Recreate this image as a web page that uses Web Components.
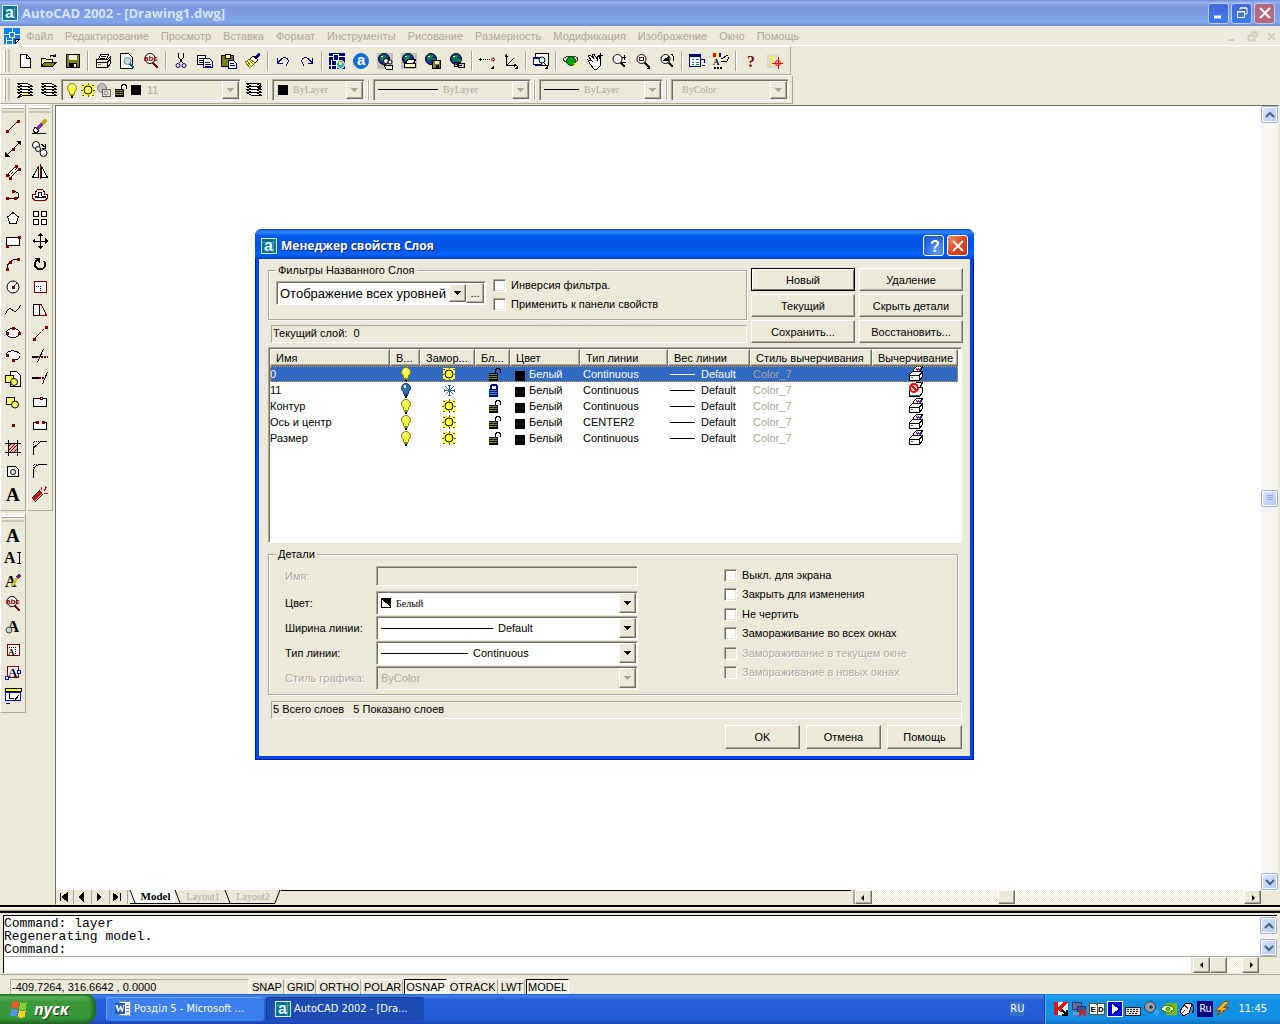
<!DOCTYPE html>
<html lang="ru">
<head>
<meta charset="utf-8">
<title>AutoCAD 2002 - [Drawing1.dwg]</title>
<style>
  html, body { height: 100%; margin: 0; overflow: hidden; }
  body { font: 11px/14px "Liberation Sans", Arial, sans-serif; color: #000; background: #ece9d8; }
</style>
</head>
<body>
<cad-desktop></cad-desktop>

<script>
// Icons are 16x16 fragments. p() strokes a path, f() fills one, r() is a box.
const p = (d, c = "#000", w = 1) => `<path d="${d}" fill="none" stroke="${c}" stroke-width="${w}"/>`;
const f = (d, c = "#000", s = "none") => `<path d="${d}" fill="${c}" stroke="${s}"/>`;
const r = (x, y, w, h, c = "#000", s = "none") => `<rect x="${x}" y="${y}" width="${w}" height="${h}" fill="${c}" stroke="${s}"/>`;
const o = (x, y, rad, c = "none", s = "#000") => `<circle cx="${x}" cy="${y}" r="${rad}" fill="${c}" stroke="${s}" shape-rendering="auto"/>`;
const t = (x, y, size, s, c = "#000", fam = "Liberation Serif") =>
  `<text x="${x}" y="${y}" font-family="${fam}" font-weight="bold" font-size="${size}" fill="${c}">${s}</text>`;
const dash = (path, pattern = "1 1") => path.replace("/>", ` stroke-dasharray="${pattern}"/>`);
const dot = (x, y) => r(x - 1, y - 1, 3, 3, "#800000");

const RED = "#800000";
const NAVY = "#000080";
const SANS = "Liberation Sans";
const globe = (x, y, s) => o(x, y, s, "#1030b0", "#000") + f(`M${x - 4} ${y - 2}h2v-2h4v2h-1v2h-2v2h-2zM${x + 1} ${y}h4v3h-2v1h-2z`, "#009020") + r(x - 3, y - 3, 2, 1, "#fff");
const lens = o(6.5, 6, 4.5, "#fff") + p("M10 10l4 4", "#000", 2);
const corner = f("M15 12v4h-4z");
const flop = (x, y, s) => r(x, y, s, s, "#808000", "#000") + r(x + 2, y, s - 4, s / 2 - 1, "#ece9d8") + r(x + 3, y + s - 4, s - 5, 4);
const printer = f("M5.500 1.500h8l-2 5h-8z", "#fff", "#000") + f("M1.500 6.500h11l3-3v7l-3 4h-11z", "#ece9d8", "#000") +
  p("M1 9.500h11l3-3M12.500 10v4M6 3.500h5M5 5.500h5") + r(3, 11, 3, 1, "#808000");
const sheet = (y, c) => f(`M.5 ${y}.500h10l5 3h-10z`, c, "#000");
const layers = (c) => sheet(10, c) + sheet(7, "#fff") + sheet(4, "#fff") + sheet(1, "#fff");
const bulb = (c, e = "#808000") => o(8, 6, 4.5, c, e) + r(6, 9, 4, 3, c) + p("M5.500 10v2M10.500 10v2", e) + r(6, 12, 4, 2, e) + r(7, 14, 2, 2) + r(6, 3, 2, 3, "#fff");
const padlock = (open, c) => p(open ? "M9.500 8V3.500h1v-1h3v1h1V7" : "M5 7V4l1-1h4l1 1v3", open ? "#000" : NAVY, open ? 1 : 2) +
  r(3, 7, 9, 8, open ? "#000" : NAVY) + p("M3 8.500h8M3 10.500h8M3 12.500h8", c);
const paper = f("M5.500 3.500l3-3h6l-3 6h-7z", "#fff", "#000") + f("M1.500 8.500l3-3h10v5l-3 4h-10z", "#fff", "#000");
const bigA = (x, y, s) => t(x, y, s, "A");

const ICONS = {
  blueprint: r(0, 0, 16, 16, "#0080ff") + p("M5.500 4.500h5v5h-5zM0 6.500h5M11 6.500h5M8.500 0v4M8.500 10v6M2.500 9v7M2.500 12.500h6", "#fff") + f("M16 11l-5 5h5z", "#fff") + f("M11 16v-5h5z", "#ece9d8", "#000"),
  app: r(0, 0, 16, 16, "#d8f0f8") + r(1, 1, 14, 14, "#087090") + p("M1 4.500h14M12.500 1v14", "#3c9cb4") + t(3, 13, 16, "a", "#e8fbff", SANS),
  blank: f("M3.500 1.500h6l4 4v9h-10z", "#fff", "#000") + p("M9.500 2v3.500h4"),
  open: f("M.5 13.500v-8h4l1 1h6v3", "#ffff80", "#000") + f("M.5 13.500l3-4.500h12l-4 4.500z", "#808000", "#000") + p("M9 3.500q2-3 5 0M14.500 1v3M12 3.500h3"),
  save: r(1.500, 1.500, 13, 13, "#808000", "#000") + r(4, 2, 8, 5, "#ece9d8") + r(4, 10, 8, 5) + r(9, 11, 2, 3, "#fff"),
  print: printer,
  preview: f("M1.500 .5h8l4 4v11h-12z", "#fff", "#000") + o(8.500, 8, 3.500, "#b0e8e8", "#808080") + p("M11 11l4 4", "#006080", 2),
  find: o(7, 5.500, 5, "#fff", "#000") + t(1, 8, 8, "abc", RED, SANS) + p("M10 10l5 5", RED, 2),
  cut: p("M5.500 0v4l4 6M10.500 0v4l-4 6") + o(5, 12.500, 2, "none", NAVY) + o(11, 12.500, 2, "none", NAVY),
  copy: r(.5, 2.500, 8, 9, "#fff", "#000") + p("M2 5.500h5M2 7.500h5M2 9.500h5") + f("M6.500 5.500h6l3 3v6h-9z", "#fff", NAVY) + p("M8 9.500h5M8 11.500h6M8 13h6", NAVY),
  paste: r(.5, 2.500, 12, 11, "#808000", "#000") + r(4, 1, 5, 4, "#ffff80", "#000") + f("M7.500 7.500h5l3 3v5h-8z", "#fff", NAVY) + p("M9 10.500h4M9 12.500h5", NAVY),
  brush: p("M10 5l5-4", NAVY, 3) + f("M8 3l5 4-3 3-5-4z", "#fff", "#000") + f("M5 6l5 4-5 5-5-6z", "#ffffc0", "#808000") + p("M2 8l4 5M4 7l4 4", "#808000"),
  undo: p("M2.500 5v5h5M3 9.500l4-4q3-2 5 0t1 4l-2 3", NAVY, 1),
  redo: p("M13.500 5v5h-5M13 9.500l-4-4q-3-2-5 0t-1 4l2 3", NAVY, 1),
  today: r(0, 0, 16, 16, NAVY) + p("M0 3.500h4M10 3.500h6M4.500 1v6h5V1zM7 7v9M2.500 7v9M0 12.500h7", "#fff") + o(11.500, 11.500, 4, "#20a0e0", "#fff") + f("M10 9h3v3h-3z", "#ffff00"),
  aball: o(8, 8, 7.500, "#0a6cd8", "#0a6cd8") + t(4, 12, 15, "a", "#fff", SANS),
  meet: r(0, 0, 16, 16, "#c0c0c0") + globe(7, 6, 5.500) + o(9, 8, 2.500, "#fff") + o(13, 9, 2, "#fff") + f("M7 12h8v4H9z", "#fff", "#000"),
  webprint: r(0, 0, 16, 16, "#c0c0c0") + globe(7, 6, 5.500) + f("M6.500 6.500h8l-2 4h-8z", "#fff", "#000") + r(3.500, 10.500, 11, 4, "#ffffc0", "#000"),
  websave: globe(6, 6, 5.500) + flop(7.500, 7.500, 8),
  link: globe(7, 6, 5.500) + r(5.500, 9.500, 6, 4, "none", "#000") + r(9.500, 10.500, 6, 4, "#c0c0c0", "#000") + p("M8 12.500h5"),
  track: p("M0 6.500h3M1.500 5v3") + dash(p("M4 6.500h8")) + o(14, 6.500, 1.500, "none", RED) + corner,
  ucs: p("M3.500 2v10.500H13M3.500 12.500l7-7M2 4l1.500-2L5 4M11 11l2 1.500-2 1.500") + corner,
  named: r(2.500, .5, 13, 12, "#fff", "#000") + r(0.500, 4.500, 8, 7, "#fff", NAVY) + r(0, 4, 9, 2, NAVY) + o(9, 7, 3, "#d0ffff") + p("M11 10l3 3") + corner,
  orbit: p("M1 5q7-4 14 0q1 4-7 5Q-1 9 1 5", "#404040") + o(8, 8, 4.500, "#00a010", "#004000") + r(11, 10, 3, 3, "#ffff00"),
  pan: f("M1 7l4 1-4-5 2-1 4 4-2-5h2l3 5V3h2l2 6-1 4-3 3H7l-4-5z", "#fff", "#000") + p("M13.500 0v6M11 2.500h5"),
  zoomrt: lens + p("M11 4.500h4M13.500 2v5M11 9.500h4"),
  zoomwin: lens + r(4.500, 4.500, 4, 3, "none", RED) + corner,
  zoomprev: lens + f("M3 8l7-5v5z") + p("M12 1q4 2 2 7", "#000", 1),
  props: r(.5, 1.500, 11, 12, "#fff", NAVY) + r(0, 1, 12, 3, NAVY) + p("M3 6.500h2M7 6.500h3M3 9.500h2M7 9.500h3M3 11.500h2M7 11.500h3", "#008080", 1) + p("M12 6.500h3.500V10M13 12.500h3", NAVY),
  dcenter: r(0, 0, 3, 4, "#f00") + r(3, 0, 3, 4, "#ff0") + r(6, 0, 2, 4, "#00f") + t(0, 12, 9, "A") + p("M8 6l7-4M8 8h6l2-4") + dash(p("M1 14.500h8", "#000", 2), "2 1"),
  help: t(4, 14, 16, "?", RED),
  assist: r(0, 1, 12, 14, "#d8d8d8") + t(1, 13, 15, "?", "#ffff00") + o(11, 10, 2.500, "none", "#f00") + p("M5 10.500h11M11.500 4v12", "#f00"),
  layers: layers("#ffff00") + f("M0 16l3-4 2 3z"),
  layers2: layers("#fff"),
  layerprev: layers("#fff") + f("M15 3l-5 2 4 4z") + p("M9 1h5v5", "#000", 1),
  bulb: bulb("#ffff40"),
  bulboff: bulb("#2c70a8", "#203080"),
  sun: r(2, 2, 12, 12, "#ffff40") + o(8, 8, 4, "#ffff40") + p("M2 3h2M12 3h2M2 13h2M12 13h2M8 1v2M8 13v2M1 8h2M13 8h2", "#606000"),
  snow: p("M8.500 3v11M3 8.500h11M4.500 4.500l8 8M12.500 4.500l-8 8M7 3.500h3M7 13.500h3M3.500 7v3M13.500 7v3", "#4060b0"),
  vpfreeze: o(6, 6, 4.500, "#c0c0c0", "#808080") + r(6.500, 7.500, 8, 7, "#ece9d8", "#606060") + o(10, 11, 2, "none", "#808080"),
  unlock: padlock(true, "#808000"),
  lock: padlock(false, "#00a0c0"),
  black: r(3, 3, 10, 10),
  plot: paper + p("M2 9.500h9l3-3M11.500 10v4") + p("M8 4l1-2M11 5l2-3", "#2040ff") + p("M9 5l2-3", "#f00") + r(3, 11, 2, 1, "#00a000"),
  noplot: paper + p("M2 13.500h10", "#008080") + o(6, 6, 4, "#fff", "#f00").replace("/>", ' stroke-width="2"/>') + p("M3 3l6 6", "#f00", 2),

  line: p("M2.500 13.500l11-11") + dot(2, 13) + dot(13, 3),
  xline: p("M2 14L14 2") + f("M0 16v-5l5 5zM16 0v5l-5-5z") + dot(8, 8),
  mline: p("M2 11L11 2M5 14l9-9") + dash(p("M3 13L13 3")) + dot(2, 11) + dot(5, 14) + dot(11, 2) + dot(14, 5),
  pline: p("M1 11.500h9q4 0 4-3t-4-4H8") + dot(2, 11) + dot(10, 11) + dot(8, 4),
  polygon: f("M8 2.500l5.500 4.500-2.500 6.500h-6L2.500 7z", "#fff", "#000"),
  rect: r(1.500, 4.500, 13, 8, "#fff", "#000") + dot(2, 13) + dot(14, 4),
  arc: p("M2 13q0-9 11-10") + dot(2, 13) + dot(5, 6) + dot(13, 3),
  circle: o(8, 8, 6, "#fff") + p("M8 8l4-4", RED) + dot(8, 8),
  spline: p("M.5 12q3-8 7-4t8-5"),
  ellipse: `<ellipse cx="8" cy="8" rx="7" ry="4.500" fill="#fff" stroke="#000"/>` + dot(2, 8) + dot(8, 3) + dot(14, 8),
  earc: f("M8 12q6 0 7-4t-6-5q-6-1-8 4", "#fff", "#000") + dot(2, 7) + dot(8, 12),
  insert: f("M5.500 .5h6l4 4v11h-10z", "#fff", "#000") + r(.5, 4.500, 8, 7, "#ffff60", "#000") + o(9, 11, 3.500, "#ffff60"),
  block: r(1.500, 3.500, 8, 7, "#ffff60", "#000") + o(10, 10.500, 3.500, "#ffff60"),
  point: dot(8, 8),
  hatch: r(3, 3, 10, 10, "#e8b0b0") + p("M3 7l4-4M3 11l8-8M4 13l9-9M8 13l5-5", RED) + p("M0 3.500h16M0 12.500h16M3.500 0v16M12.500 0v16"),
  region: f("M2.500 3.500h8l3 3v7h-11z", "#fff", "#000") + o(8, 9, 2.500),
  text: bigA(1, 15, 19),
  erase: p("M9 7l5-5", "#c0a000", 3) + p("M5 11l5-5", "#8030a0", 4) + f("M3 9l4 4-3 2-3-2z", "#fff", "#000") + p("M0 15.500h14"),
  copyobj: o(4, 4, 3.500, "#fff") + o(11.500, 12, 3.500, "#fff") + o(6, 8, 2.500, "#fff") + p("M9 3l4 3M13.500 3v4h-4"),
  mirror: f("M6.500 2v11.500h-6z", "#fff", "#000") + f("M9.500 2v11.500h6z", "#fff", "#000") + p("M8 0v15", RED),
  offset: f("M.5 11V8l3-1q0-5 4.500-5t4.500 5l3 1v3l-2 2h-11z", "#fff", RED) + p("M3 10.500V9h3q0-4 2-4t2 4h3v1.500z"),
  array: r(1.500, 1.500, 5, 5, "#fff", "#000") + r(9.500, 1.500, 5, 5, "#fff", "#000") + r(1.500, 9.500, 5, 5, "#fff", "#000") + r(9.500, 9.500, 5, 5, "#fff", "#000"),
  move: p("M8 2v12M2 8h12", "#000", 1) + f("M8 0l3 3H5zM8 16l3-3H5zM0 8l3-3v6zM16 8l-3-3v6z"),
  rotate: p("M5 4q-4 4-1 7.500t7 1T12 5", "#000", 2) + f("M2 2h6v6z"),
  scale: r(2.500, 2.500, 12, 11, "#fff", RED) + dash(p("M2 7.500h6.500V14")),
  stretch: f("M1.500 2.500h6v11h-6z", "#fff", "#000") + p("M7.500 2.500h2l5 11h-7", RED),
  lengthen: p("M2 14l5-5") + dash(p("M7 9l7-7", RED)) + dot(2, 14) + dot(14, 2),
  trim: p("M0 8.500h8", "#000", 2) + dash(p("M9 8.500h7", RED, 2), "2 1") + p("M11.500 1l-6 13"),
  extend: p("M0 6.500h7", "#000", 2) + dash(p("M7 6.500h5", RED, 2), "2 1") + p("M15.500 1l-5 12"),
  brkpt: r(1.500, 4.500, 13, 8, "#fff", "#000") + r(8.500, 3.500, 2, 2, "#fff", RED),
  brk: f("M4 5.500H1.500v7h13v-7H12", "#fff", "#000") + dot(5, 5) + dot(11, 5),
  chamfer: p("M1.500 15V8l7-6.500H15") + dash(p("M1.500 7V1.500h6")),
  fillet: p("M1.500 15V9q0-7 7-7.500H15") + dash(p("M1.500 7V1.500h6")),
  explode: p("M1 14l8-8", "#d01010", 4) + p("M0 12l8-8M3 16l8-8") + p("M10 4l-1-3M12 5l3-4M12 7h4M13 3l1-3", "#d01010"),
  mtext: bigA(-1, 13, 16) + p("M12 2.500h4M14.500 3v10M12 13.500h4"),
  edtext: bigA(0, 14, 16) + p("M7 13l6-9", "#c8c800", 3) + p("M12 5l3-3", "#602080", 3),
  astyle: bigA(2, 13, 17) + o(4, 11, 3, "#c0d8d0", "#404040"),
  ascale: r(2.500, 2.500, 12, 11, "#fff", RED) + t(3, 13, 9, "A") + dash(p("M2 5.500h8.500V14")),
  ajust: r(2.500, 1.500, 11, 11, "#fff", RED) + bigA(3, 12, 13) + r(.5, 11.500, 3, 3, "#fff", "#00f") + r(12.500, 5.500, 3, 3, "#fff", "#00f"),
  aspace: r(0, 0, 16, 3, "#ffff00", "#000") + r(.5, 4.500, 15, 8, "#fff", "#00f") + p("M4.500 5v5h4M9 13l5-6") + p("M1 15.500h4", "#00f"),

  word: r(4.500, .5, 11, 14, "#fff", "#8098c8") + p("M11 4h3M11 7h3M11 10h3", "#5078c0") + r(0, 2, 10, 11, "#2858b0") + t(0, 11, 10, "W", "#fff"),
  k: r(1, 1, 14, 13, "#f4f4f4") + f("M1 1h4v5l5-5h5L9 7l2 3-4 1-2-2v5H1z", "#e01010") + p("M9 9l5 5M14 9v5h-5", "#000", 2),
  net: r(1, 1, 9, 7, "#6070a0", "#304070") + r(6, 5, 8, 6, "#405090", "#203060") + p("M8 9l7 6M15 9l-7 6", "#d02020", 2) + r(2, 11, 6, 3, "#8090b0"),
  ed: f("M.5 2.500h6.500l1 1 1-1h6.500v11h-15z", "#fff", "#605030") + p("M8 3v11", "#605030") + t(1.500, 11, 8, "E", "#000", SANS) + t(9, 11, 8, "D", "#000", SANS),
  play: r(.5, .5, 15, 15, "#0000e0", "#fff") + f("M5 3l7 5-7 5z", "#fff"),
  kbd: r(.5, 6.500, 15, 8, "#ddd", "#222") + dash(p("M2 8.500h12M2 10.500h12M4 12.500h8", "#222"), "2 1"),
  vol: o(7, 6, 5.500, "#8c98a8", "#304050") + o(8, 6, 2.500, "#303840", "#c0c8d0") + p("M11 13l4-5M13 15l3-5", "#60b0ff"),
  nv: r(5, 2, 11, 12, "#76b900") + f("M0 8q6-8 13 0q-6 7-13 0", "#e8ffd0", "#4c8000") + o(7, 8, 2, "#76b900", "#4c8000"),
  mouse: f("M1 10l6-8 6 1-3 9-6 3z", "#fff", "#000") + p("M6 4l3 4M3 12l3-3", "#c00") + p("M13 3q4 5 0 9", "#000"),
  bolt: f("M10 0l-9 9h5l-4 6 12-9H9l5-5z", "#ffb020", "#805010"),
  flag: f("M2 2q3-2 6 0L7 8Q4 6 1 8z", "#f85828") + f("M9 2q3 2 6 0l-1 6q-3 2-6 0z", "#88d038") + f("M1 9q3-2 6 0l-1 6q-3-2-6 0z", "#5090ff") + f("M8 9q3 2 6 0l-1 6q-3 2-6 0z", "#ffd028"),
};

const svg = (name) => `<svg viewBox="0 0 16 16" width="16" height="16" shape-rendering="crispEdges" aria-hidden="true">${ICONS[name]}</svg>`;

const bevel = `
  .raised { border: 1px solid; border-color: #fff #716f64 #716f64 #fff; box-shadow: inset -1px -1px #aca899; background: #ece9d8; }
  .sunken { border: 1px solid; border-color: #aca899 #fff #fff #aca899; }
`;

class Widget extends HTMLElement {
  connectedCallback() {
    const root = this.attachShadow({ mode: "open" });
    root.innerHTML = `<style>* { box-sizing: border-box; } svg { display: block; flex: none; overflow: visible; }
      button, input, select { font: inherit; color: inherit; margin: 0; padding: 0; }
      ${bevel}</style>${this.render()}`;
  }
}

class CadIcon extends Widget {
  render() {
    return `<style>:host { display: block; width: 16px; height: 16px; flex: none; }</style>${svg(this.getAttribute("name"))}`;
  }
}

// A toolbar: `icons` is a space separated list, "|" starts a new group.
class ToolBar extends Widget {
  render() {
    const items = (this.getAttribute("icons") || "").split(" ").filter(Boolean).map((n) =>
      n === "|" ? `<i></i>` : `<button aria-label="${n}">${svg(n)}</button>`).join("");
    return `<style>
      :host { display: flex; align-items: center; flex: none; align-self: start; height: 29px; padding-right: 3px;
        border: 1px solid; border-color: #fff #aca899 #aca899 #fff; box-sizing: border-box; }
      .grip { width: 7px; height: 23px; margin: 0 3px 0 2px; border: solid; border-width: 0 2px;
        border-color: #fff #c8c4b4 #c8c4b4 #fff; background: linear-gradient(90deg, #aca899 1px, #ece9d8 1px 4px, #fff 4px); flex: none; }
      i { width: 2px; height: 20px; margin: 0 2px; background: #aca899; border-right: 1px solid #fff; }
      button { display: grid; place-items: center; width: 24px; height: 23px; border: 0; background: none; }
      :host([vertical]) { flex-direction: column; height: auto; width: 26px; padding: 0 0 5px; }
      :host([vertical]) .grip { width: 22px; height: 7px; margin: 1px 0; border-width: 2px 0;
        border-color: #fff #aca899 #c8c4b4; background: linear-gradient(#aca899 1px, #ece9d8 1px 3px, #fff 3px); }
    </style><span class="grip"></span>${items}<slot></slot>`;
  }
}

class WinButton extends Widget {
  render() {
    return `<style>
      :host { display: block; height: 23px; }
      button { width: 100%; height: 100%; display: block; }
      :host([default]) button { border-color: #000; box-shadow: inset 1px 1px #fff, inset -1px -1px #716f64; }
    </style><button class="raised"><slot></slot></button>`;
  }
}

// Drop-down with an optional label in front and a "lead" slot for a swatch or line sample.
class WinCombo extends Widget {
  render() {
    const off = this.hasAttribute("disabled");
    const label = this.getAttribute("label");
    return `<style>
      :host { display: flex; align-items: center; height: 24px; }
      label { width: 91px; flex: none; }
      .box { flex: 1; min-width: 0; height: 100%; display: flex; align-items: center; gap: 5px; padding: 0 1px 0 4px;
        border: 1px solid; border-color: #aca899 #fff #fff #aca899; box-shadow: inset 1px 1px #716f64; background: #fff; }
      select { appearance: none; border: 0; background: none; flex: 1; min-width: 0; opacity: 1; font: var(--combo-font, inherit); outline: 0; }
      .drop { width: 17px; align-self: stretch; margin: 1px 0; display: grid; place-items: center; }
      :host([disabled]) { color: #aca899; }
      :host([disabled]) label { text-shadow: 1px 1px #fff; }
      :host([disabled]) .box { background: #ece9d8; }
      :host([flat]) .box { border: 0; box-shadow: none; padding: 0 0 0 2px; gap: 0; }
    </style>
    ${label ? `<label for="s">${label}</label>` : ""}
    <div class="box"><slot name="lead"></slot>
      <select id="s" ${label ? "" : 'aria-label="Список"'} ${off ? "disabled" : ""}><option>${this.getAttribute("value")}</option></select>
      <span class="drop raised"><svg width="7" height="4" shape-rendering="crispEdges"><path d="M0 0h7L3.500 4z" fill="${off ? "#aca899" : "#000"}"/></svg></span>
    </div>`;
  }
}

class WinCheck extends Widget {
  render() {
    return `<style>
      :host { display: block; height: 13px; line-height: 13px; }
      label { display: flex; gap: 5px; align-items: center; white-space: nowrap; }
      input { appearance: none; width: 13px; height: 13px; background: #fff; border: 1px solid; border-color: #aca899 #fff #fff #aca899;
        box-shadow: inset 1px 1px #716f64, inset -1px -1px #ece9d8; flex: none; }
      :host([disabled]) { color: #aca899; text-shadow: 1px 1px #fff; }
      :host([disabled]) input { background: #ece9d8; }
    </style><label><input type="checkbox" ${this.hasAttribute("disabled") ? "disabled" : ""}><slot></slot></label>`;
  }
}

class GroupBox extends Widget {
  render() {
    return `<style>
      :host { display: block; }
      fieldset { margin: 0; height: 100%; min-width: 0; padding: 0 7px; border: 1px solid #aca899; box-shadow: 1px 1px #fff, inset 1px 1px #fff; }
      legend { padding: 0 2px; line-height: 14px; background: #ece9d8; }
    </style><fieldset><legend>${this.getAttribute("label")}</legend><slot></slot></fieldset>`;
  }
}

// XP scroll button, or the old grey one without `xp`.
class ScrollButton extends Widget {
  render() {
    const arrows = { up: "M4 10l4-4 4 4", down: "M4 6l4 4 4-4" };
    const solid = { left: "M9 5v6L6 8z", right: "M7 5v6l3-3z" };
    const dir = this.getAttribute("dir");
    const grip = this.hasAttribute("xp") ? p("M5 5.500h6M5 7.500h6M5 9.500h6", "#8ca8e8") : "";
    const glyph = arrows[dir] ? p(arrows[dir], "#4d6185", 2) : solid[dir] ? f(solid[dir]) : grip;
    return `<style>
      :host { display: block; width: 17px; height: 16px; flex: none; }
      button { width: 100%; height: 100%; display: grid; place-items: center; }
      :host([xp]) button { border: 1px solid #98b0e8; border-radius: 2px; box-shadow: inset 0 0 0 1px #fff; background: linear-gradient(135deg, #d8e4ff, #b4c8f8); }
    </style><button class="${this.hasAttribute("xp") ? "" : "raised"}" aria-label="${dir || "thumb"}"><svg width="14" height="14" viewBox="1 1 14 14">${glyph}</svg></button>`;
  }
}

class ScrollTrack extends Widget {
  render() {
    return `<style>
      :host { display: flex; background: repeating-conic-gradient(#fff 0 25%, #ece9d8 0 50%) 0 0 / 2px 2px; }
      :host([vertical]) { flex-direction: column; width: 17px; background: #f5f4ee; }
      .gap { flex: var(--before, 1); } .rest { flex: var(--after, 1); }
    </style><slot name="start"></slot><span class="gap"></span><slot></slot><span class="rest"></span><slot name="end"></slot>`;
  }
}

class CaptionButton extends Widget {
  render() {
    const kind = this.getAttribute("kind");
    const glyph = {
      min: p("M3 12h7", "#fff", 3),
      restore: p("M6 4.500V3h7v6h-2M3.500 6.500h7v6h-7zM3 7h8M6 3h7", "#fff", 1),
      close: p("M3 3l10 10M13 3L3 13", "#fff", 2),
      help: t(4, 14, 16, "?", "#fff", SANS),
    }[kind];
    return `<style>
      :host { display: block; width: 21px; height: 21px; }
      button { width: 100%; height: 100%; display: grid; place-items: center; border: 1px solid #fff; border-radius: 3px;
        background: radial-gradient(circle at 70% 80%, #5a9cff, #2860d8 70%); }
      :host([kind="close"]) button { background: linear-gradient(135deg, #f09070, #e04820 50%, #c83810); }
      :host([dim]) button { border-color: #b8ccf4; background: linear-gradient(#4468d8, #3c7cf0); }
      :host([dim][kind="close"]) button { background: #b8687c; }
    </style><button aria-label="${kind}"><svg width="16" height="16" viewBox="0 0 16 16">${glyph}</svg></button>`;
  }
}

class LayerTable extends Widget {
  render() {
    const cols = [["Имя", 120], ["В...", 30], ["Замор...", 55], ["Бл...", 35], ["Цвет", 70], ["Тип линии", 88], ["Вес линии", 82], ["Стиль вычерчивания", 122], ["Вычерчивание", 86]];
    const rows = [
      ["0", "bulb", "sun", "unlock", "Continuous", "plot"],
      ["11", "bulboff", "snow", "lock", "Continuous", "noplot"],
      ["Контур", "bulb", "sun", "unlock", "Continuous", "plot"],
      ["Ось и центр", "bulb", "sun", "unlock", "CENTER2", "plot"],
      ["Размер", "bulb", "sun", "unlock", "Continuous", "plot"],
    ];
    return `<style>
      :host { display: block; height: 196px; background: #fff; border: 1px solid; border-color: #aca899 #fff #fff #aca899;
        box-shadow: inset 1px 1px #716f64; padding: 1px 0 0 1px; box-sizing: border-box; }
      table { width: 688px; table-layout: fixed; border-collapse: separate; border-spacing: 0; }
      th { height: 17px; padding: 0 0 0 5px; text-align: left; font-weight: normal; white-space: nowrap; line-height: 14px; }
      td { height: 16px; padding: 0 0 0 3px; line-height: 14px; white-space: nowrap; }
      td:first-child { padding-left: 0; }
      td > svg { margin: 0 auto; }
      td.mid { padding: 0 0 0 2px; }
      .sw { display: inline-block; width: 10px; height: 10px; background: #000; margin: 0 4px 0 2px; vertical-align: -3px; }
      .ln { display: inline-block; width: 25px; height: 1px; background: #000; margin: 0 6px 0 -1px; vertical-align: 3px; }
      .sel .ln { background: #fff; }
      .plot { color: #aca899; }
      .sel { background: #316ac5; color: #fff; outline: 1px dotted #e09a3a; outline-offset: -1px; }
    </style>
    <table><colgroup>${cols.map(([, w]) => `<col style="width:${w}px">`).join("")}</colgroup>
      <thead><tr>${cols.map(([n]) => `<th class="raised" scope="col">${n}</th>`).join("")}</tr></thead>
      <tbody>${rows.map(([name, on, fz, lk, lt, pl], i) => `<tr class="${i ? "" : "sel"}">
        <td>${name}</td><td class="mid">${svg(on)}</td><td class="mid">${svg(fz)}</td><td class="mid">${svg(lk)}</td>
        <td><span class="sw"></span>Белый</td><td>${lt}</td><td><span class="ln"></span>Default</td>
        <td class="plot">Color_7</td><td class="mid">${svg(pl)}</td></tr>`).join("")}</tbody>
    </table>`;
  }
}

class LayerDialog extends Widget {
  render() {
    return `<style>
      :host { display: flex; flex-direction: column; border-radius: 7px 7px 0 0; background: #0046e0; padding: 0 4px 4px;
        box-shadow: inset 1px -1px #0018a0, inset -1px 0 #0018a0; box-sizing: border-box; }
      header { height: 30px; margin: 0 -4px; padding: 3px 6px 0; display: flex; align-items: center; gap: 3px; border-radius: 7px 7px 0 0;
        background: linear-gradient(#0848c8, #2c88ff 3px, #0058ee 7px, #0054e4 18px, #0064ff 25px, #0040c8); }
      h1 { flex: 1; margin: 0 0 0 1px; font: bold 12px/18px "Open Sans", sans-serif; color: #fff; text-shadow: 1px 1px #0a1883; }
      main { background: #ece9d8; padding: 4px 8px 7px 9px; }
      .top { display: grid; grid-template-columns: 1fr 104px 104px; column-gap: 4px; margin-right: -1px; }
      .btns { display: grid; grid-column: span 2; grid-template-columns: 1fr 1fr; gap: 3px 4px; padding-top: 5px; align-content: start; }
      .left { display: grid; gap: 5px; align-content: start; }
      .filter { display: grid; grid-template-columns: 210px 1fr; gap: 7px; padding: 0 0 8px; }
      .pick { display: flex; background: #fff; height: 24px; padding: 1px; border: 1px solid; border-color: #aca899 #fff #fff #aca899; box-shadow: inset 1px 1px #716f64; margin-top: 4px; }
      .pick win-combo { flex: 1; min-width: 0; height: auto; --combo-font: 13px "Liberation Sans", sans-serif; } .pick win-button { width: 18px; height: auto; }
      .checks { display: grid; gap: 6px; padding-top: 2px; align-content: start; }
      .field { height: 18px; padding: 0 1px; line-height: 15px; margin-left: 3px; }
      layer-table { margin-top: 4px; }
      .details { margin: 4px 4px 6px 0; height: 148px; display: block; }
      .grid { display: grid; grid-template-columns: 353px 1fr; column-gap: 86px; padding: 5px 0 0 9px; align-items: start; }
      .fields { display: grid; grid-auto-rows: 25px; align-items: start; }
      .opts { display: flex; flex-direction: column; justify-content: space-between; height: 110px; margin-top: 3px; }
      .name { display: flex; align-items: center; color: #aca899; text-shadow: 1px 1px #fff; }
      .name label { width: 91px; }
      .name input { flex: 1; min-width: 0; height: 20px; background: #ece9d8; border: 1px solid; border-color: #aca899 #fff #fff #aca899; box-shadow: inset 1px 1px #716f64; }
      .line { height: 1px; background: #000; flex: none; }
      .w { width: 112px; } .t { width: 87px; }
      .half { width: 10px; height: 10px; background: linear-gradient(to top right, #fff 50%, #000 50%); border: 1px solid #000; box-sizing: border-box; flex: none; }
      .serif { --combo-font: 10px "Liberation Serif", serif; }
      footer { display: flex; justify-content: flex-end; gap: 6px; margin-top: 6px; }
      footer win-button { width: 75px; height: 24px; }
    </style>
    <header><cad-icon name="app"></cad-icon><h1>Менеджер свойств Слоя</h1><win-caption kind="help"></win-caption><win-caption kind="close"></win-caption></header>
    <main>
      <div class="top">
        <div class="left">
          <group-box label="Фильтры Названного Слоя"><div class="filter">
            <div class="pick"><win-combo flat value="Отображение всех уровней"></win-combo><win-button>...</win-button></div>
            <div class="checks"><win-check>Инверсия фильтра.</win-check><win-check>Применить к панели свойств</win-check></div>
          </div></group-box>
          <div class="field sunken">Текущий слой:&nbsp; 0</div>
        </div>
        <div class="btns">
          <win-button default>Новый</win-button><win-button>Удаление</win-button>
          <win-button>Текущий</win-button><win-button>Скрыть детали</win-button>
          <win-button>Сохранить...</win-button><win-button>Восстановить...</win-button>
        </div>
      </div>
      <layer-table></layer-table>
      <group-box class="details" label="Детали"><div class="grid">
        <div class="fields">
          <div class="name"><label for="n">Имя:</label><input id="n" disabled></div>
          <win-combo class="serif" label="Цвет:" value="Белый"><span slot="lead" class="half"></span></win-combo>
          <win-combo label="Ширина линии:" value="Default"><span slot="lead" class="line w"></span></win-combo>
          <win-combo label="Тип линии:" value="Continuous"><span slot="lead" class="line t"></span></win-combo>
          <win-combo label="Стиль графика:" value="ByColor" disabled></win-combo>
        </div>
        <div class="opts">
          <win-check>Выкл. для экрана</win-check><win-check>Закрыть для изменения</win-check>
          <win-check>Не чертить</win-check><win-check>Замораживание во всех окнах</win-check>
          <win-check disabled>Замораживание в текущем окне</win-check><win-check disabled>Замораживание в новых окнах</win-check>
        </div>
      </div></group-box>
      <div class="field sunken">5 Всего слоев&nbsp;&nbsp; 5 Показано слоев</div>
      <footer><win-button>OK</win-button><win-button>Отмена</win-button><win-button>Помощь</win-button></footer>
    </main>`;
  }
}

// The model space with its layout tabs and scroll bars.
class CadCanvas extends Widget {
  render() {
    const nav = ["M4 3v8M11 3v8L6 7z", "M9 3v8L5 7z", "M5 3v8l4-4z", "M10 3v8M3 3v8l5-4z"];
    const tab = (name, on) => `<button class="tab ${on ? "on" : ""}"><svg width="6" height="14"><path d="M0 0L5 13" stroke="#000"/></svg><span>${name}</span></button>`;
    return `<style>
      :host { display: flex; flex-direction: column; flex: 1; min-width: 0; border: 1px solid; border-color: #716f64 #ece9d8 #ece9d8 #716f64; border-right-width: 2px; margin-top: 1px; }
      .view { flex: 1; display: flex; justify-content: flex-end; background: #fff; min-height: 0; }
      .view scroll-button { width: 17px; height: 17px; }
      .tabs { display: flex; height: 14px; }
      .nav { width: 18px; height: 14px; border: 0; border-right: 1px solid #aca899; background: #ece9d8; }
      .tab { display: flex; align-items: stretch; border: 0; border-bottom: 1px solid #000; height: 14px; background: #ece9d8; font: 10px/13px "Liberation Serif", serif; color: #aca899; padding: 0; }
      .tab span { padding: 0 4px; width: 44px; }
      .tab.on { background: #fff; color: #000; font: bold 11px/13px "Liberation Serif", serif; margin-left: 2px; }
      .tab.on span { width: 39px; padding: 0 2px; }
      .fill { flex: 572; border-top: 1px solid #000; }
      .hs { flex: 408; margin-left: 2px; border-left: 2px solid #aca899; --before: 126; --after: 228; }
      .hs scroll-button { height: 14px; }
      .corner { width: 17px; border-top: 1px solid #fff; }
      .v { --before: 367; --after: 367; }
    </style>
    <div class="view"><scroll-track vertical class="v"><scroll-button xp dir="up" slot="start"></scroll-button><scroll-button xp></scroll-button><scroll-button xp dir="down" slot="end"></scroll-button></scroll-track></div>
    <div class="tabs">${nav.map((d) => `<button class="nav" aria-label="nav"><svg width="14" height="14" shape-rendering="crispEdges"><path d="${d}" stroke="#000"/></svg></button>`).join("")}
      ${tab("Model", true)}${tab("Layout1")}${tab("Layout2")}<svg width="6" height="14"><path d="M5 0L0 13" stroke="#000"/></svg>
      <span class="fill"></span>
      <scroll-track class="hs"><scroll-button dir="left" slot="start"></scroll-button><scroll-button></scroll-button><scroll-button dir="right" slot="end"></scroll-button></scroll-track>
      <span class="corner"></span>
    </div>`;
  }
}

class CommandWindow extends Widget {
  render() {
    return `<style>
      :host { display: block; padding: 0 3px 1px; }
      .split { height: 8px; margin: 0 -3px 2px; border: solid #000; border-width: 2px 0; background: linear-gradient(#fff 1px, #ece9d8 1px 3px, #aca899 3px); }
      .log { display: flex; background: #fff; border: solid #000; border-width: 1px 0 0 1px; height: 41px; padding-top: 1px; }
      pre { flex: 1; margin: 0; font: 13px/13px "Liberation Mono", monospace; }
      .log scroll-button { height: 17px; }
      .entry { display: flex; height: 17px; border-top: 1px solid #aca899; border-left: 1px solid #000; }
      .entry input { flex: 1; border: 0; background: #fff; outline: 0; margin-right: 2px; font: 13px/13px "Liberation Mono", monospace; }
      .entry scroll-track { width: 66px; margin-right: 18px; --before: 0; --after: 1; }
    </style>
    <div class="split"></div>
    <div class="log"><pre>Command: layer
Regenerating model.
Command:</pre><scroll-track vertical><scroll-button xp dir="up" slot="start"></scroll-button><scroll-button xp dir="down" slot="end"></scroll-button></scroll-track></div>
    <div class="entry"><input aria-label="Command"><scroll-track><scroll-button dir="left" slot="start"></scroll-button><scroll-button></scroll-button><scroll-button dir="right" slot="end"></scroll-button></scroll-track></div>`;
  }
}

class StatusBar extends Widget {
  render() {
    const modes = [["SNAP"], ["GRID"], ["ORTHO"], ["POLAR"], ["OSNAP", 1], ["OTRACK"], ["LWT"], ["MODEL", 1]];
    return `<style>
      :host { display: flex; height: 20px; gap: 1px; padding: 4px 0 0 10px; border-top: 1px solid #aca899; box-sizing: border-box; line-height: 14px; }
      .xyz { width: 239px; padding-left: 1px; border-bottom: 0; }
      button { border: solid; border-width: 1px 1px 0; border-color: #fff #aca899 #aca899 #fff; background: none; padding: 0 1px; line-height: 14px; }
      button.on { border-width: 1px 1px 0 1px; border-color: #000 #fff #fff #000; background: #f6f5ee; }
    </style><div class="xyz sunken">-409.7264, 316.6642 , 0.0000</div>
    ${modes.map(([m, on]) => `<button class="${on ? "on" : ""}">${m}</button>`).join("")}`;
  }
}

class TaskBar extends Widget {
  render() {
    const tray = ["k", "net", "ed", "play", "kbd", "vol", "nv", "mouse"];
    return `<style>
      :host { display: flex; align-items: center; height: 30px; color: #fff; font: 11px/14px "DejaVu Sans Condensed", "DejaVu Sans", sans-serif;
        background: linear-gradient(#1c56c8, #4088f0 2px, #2860dc 5px, #245cd8 25px, #1c44b0); }
      .start { display: flex; align-items: center; gap: 6px; width: 96px; height: 30px; padding: 0 0 0 10px; border: 0; border-radius: 0 10px 12px 0;
        background: linear-gradient(#2c7c2c, #58b058 3px, #3c983c 8px, #389838 24px, #286828); box-shadow: inset -3px 0 4px #206020;
        font: italic bold 16px/18px "Open Sans", sans-serif; color: #fff; text-shadow: 1px 1px 1px #143c14; }
      .start svg { width: 18px; height: 18px; }
      .task { display: flex; align-items: center; gap: 3px; width: 158px; height: 24px; margin-left: 10px; padding: 0 9px; border: 0; border-radius: 3px; background: #3c80f0;
        box-shadow: inset 1px 1px #68a4ff; text-align: left; white-space: nowrap; }
      .task.on { background: #1c4cb4; box-shadow: inset 1px 1px #123888; margin-left: 2px; }
      .lang { margin-left: auto; margin-right: 20px; background: #3870c8; }
      .tray { display: flex; align-items: center; gap: 2px; height: 30px; padding: 0 13px 0 8px; border-left: 1px solid #0c3c90;
        background: linear-gradient(#1478d8, #20b0f8 2px, #1490e8 6px, #1290e8 24px, #1070c0); box-shadow: inset 1px 0 #30c0ff; }
      .ru { width: 16px; line-height: 16px; background: #000080; text-align: center; }
      time { margin-left: 5px; }
    </style>
    <button class="start">${svg("flag")}пуск</button>
    <button class="task">${svg("word")}Розділ 5 - Microsoft ...</button>
    <button class="task on">${svg("app")}AutoCAD 2002 - [Dra...</button>
    <span class="lang">RU</span>
    <div class="tray">${tray.map(svg).join("")}<span class="ru">Ru</span>${svg("bolt")}<time>11:45</time></div>`;
  }
}

class CadDesktop extends Widget {
  render() {
    const menus = ["Файл", "Редактирование", "Просмотр", "Вставка", "Формат", "Инструменты", "Рисование", "Размерность", "Модификация", "Изображение", "Окно", "Помощь"];
    return `<style>
      :host { display: flex; flex-direction: column; height: 100vh; }
      .title { display: flex; align-items: center; gap: 2px; height: 26px; padding: 0 5px 0 2px;
        background: linear-gradient(#6c88d4, #98b4f0 2px, #7a96df 6px, #7c9ce4 14px, #84a8ec 22px, #6c88d0); }
      h1 { flex: 1; margin: 0 0 0 2px; font: bold 13px/18px "Open Sans", sans-serif; color: #d8e4f8; }
      nav { display: flex; align-items: center; gap: 12px; height: 20px; padding-left: 4px; border-bottom: 1px solid #fff; }
      nav a { color: #aca899; text-decoration: none; }
      nav cad-icon { margin-right: -6px; }
      .mdi { margin-left: auto; display: flex; gap: 2px; padding-right: 1px; }
      .mdi button { width: 17px; height: 17px; border: 0; background: #eeebdd; display: grid; place-items: center; }
      .props { --combo-font: 10px "Liberation Serif", serif; }
      .props win-combo { height: 22px; }
      .props i { width: 3px; height: 20px; margin: 0 3px 0 2px; background: #aca899; border: solid #fff; border-width: 0 1px; }
      .layer { width: 180px; --combo-font: 11px "Liberation Sans", sans-serif; }
      .lead { display: flex; margin: 0 -2px 0 -2px; }
      .tail { margin: 0 2px 0 5px; }
      .c1 { width: 93px; } .c2 { width: 158px; } .c3 { width: 124px; } .c4 { width: 118px; }
      .sw { width: 10px; height: 10px; background: #000; margin-left: 1px; }
      .l2, .l3 { width: 60px; height: 1px; background: #000; } .l3 { width: 35px; }
      .pad { width: 1px; }
      .work { flex: 1; display: flex; min-height: 0; gap: 2px; }
      .side { display: grid; grid-template-columns: 26px 26px; align-content: start; gap: 2px 1px; }
      layer-dialog { position: absolute; left: 255px; top: 229px; width: 719px; }
    </style>
    <div class="title"><cad-icon name="app"></cad-icon><h1>AutoCAD 2002 - [Drawing1.dwg]</h1>
      <win-caption dim kind="min"></win-caption><win-caption dim kind="restore"></win-caption><win-caption dim kind="close"></win-caption></div>
    <nav><cad-icon name="blueprint"></cad-icon>${menus.map((m) => `<a href="#">${m}</a>`).join("")}
      <span class="mdi">${["M3 11h5", "M6 3.500h6v5M3.500 6.500h6v5h-6z", "M4 4l7 7M11 4l-7 7"].map((d) => `<button aria-label="mdi"><svg width="14" height="14">${p(d, "#d0ccbc", 2)}</svg></button>`).join("")}</span></nav>
    <tool-bar icons="blank open save | print preview find | cut copy paste brush | undo redo | today aball meet webprint websave link | track ucs | named | orbit pan zoomrt zoomwin zoomprev | props dcenter | help assist"></tool-bar>
    <tool-bar class="props" icons="layers layers2">
      <win-combo class="layer" value="11" disabled><span slot="lead" class="lead"><cad-icon name="bulb"></cad-icon><cad-icon name="sun"></cad-icon><cad-icon name="vpfreeze"></cad-icon><cad-icon name="unlock"></cad-icon><cad-icon name="black"></cad-icon></span></win-combo>
      <cad-icon class="tail" name="layerprev"></cad-icon><i></i>
      <win-combo class="c1" value="ByLayer" disabled><span slot="lead" class="sw"></span></win-combo><i></i>
      <win-combo class="c2" value="ByLayer" disabled><span slot="lead" class="l2"></span></win-combo><i></i>
      <win-combo class="c3" value="ByLayer" disabled><span slot="lead" class="l3"></span></win-combo><i></i>
      <win-combo class="c4" value="ByColor" disabled><span slot="lead" class="pad"></span></win-combo>
    </tool-bar>
    <div class="work">
      <div class="side">
        <tool-bar vertical icons="line xline mline pline polygon rect arc circle spline ellipse earc insert block point hatch region text"></tool-bar>
        <tool-bar vertical icons="erase copyobj mirror offset array move rotate scale stretch lengthen trim extend brkpt brk chamfer fillet explode"></tool-bar>
        <tool-bar vertical icons="text mtext edtext find astyle ascale ajust aspace"></tool-bar>
      </div>
      <cad-canvas></cad-canvas>
    </div>
    <command-window></command-window>
    <status-bar></status-bar>
    <task-bar></task-bar>
    <layer-dialog></layer-dialog>`;
  }
}

customElements.define("cad-icon", CadIcon);
customElements.define("tool-bar", ToolBar);
customElements.define("win-button", WinButton);
customElements.define("win-combo", WinCombo);
customElements.define("win-check", WinCheck);
customElements.define("group-box", GroupBox);
customElements.define("scroll-button", ScrollButton);
customElements.define("scroll-track", ScrollTrack);
customElements.define("win-caption", CaptionButton);
customElements.define("layer-table", LayerTable);
customElements.define("layer-dialog", LayerDialog);
customElements.define("cad-canvas", CadCanvas);
customElements.define("command-window", CommandWindow);
customElements.define("status-bar", StatusBar);
customElements.define("task-bar", TaskBar);
customElements.define("cad-desktop", CadDesktop);
</script>
</body>
</html>
